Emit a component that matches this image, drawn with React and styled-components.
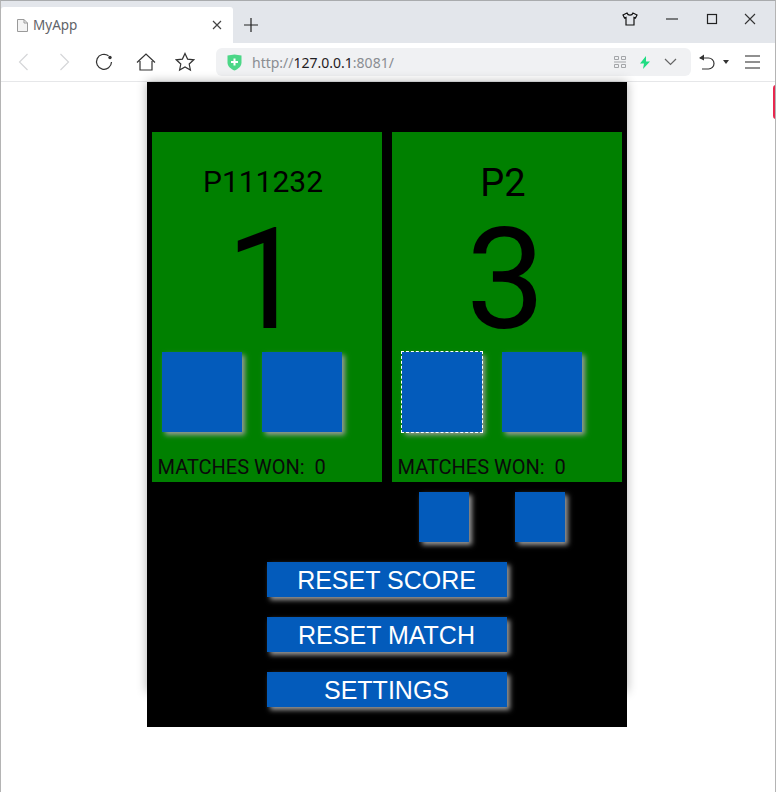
import React from "react";
import styled, { createGlobalStyle } from "styled-components";

const GlobalStyle = createGlobalStyle`
  html, body {
    margin: 0;
    padding: 0;
    background: #ffffff;
    overflow: hidden;
  }
  * {
    box-sizing: border-box;
  }
`;

const Window = styled.div`
  position: relative;
  width: 776px;
  height: 792px;
  display: flex;
  flex-direction: column;
  border-top: 1px solid #a9abad;
  border-left: 1px solid #b4b4b4;
  border-right: 1px solid #b4b4b4;
  overflow: hidden;
`;

const TabStrip = styled.div`
  height: 42px;
  background: #e3e6eb;
  display: flex;
  align-items: flex-end;
  flex-shrink: 0;
`;

const Tab = styled.div`
  width: 232px;
  height: 36px;
  background: #ffffff;
  border-radius: 3px 3px 0 0;
  display: flex;
  align-items: center;
  padding: 0 11px 0 15px;
  font-family: "Noto Sans", "Liberation Sans", sans-serif;
  font-size: 13.5px;
  color: #5f6368;
`;

const TabTitle = styled.span`
  margin-left: 4px;
  flex: 1;
`;

const NewTab = styled.div`
  width: 36px;
  height: 36px;
  display: flex;
  align-items: center;
  justify-content: center;
`;

const WindowControls = styled.div`
  margin-left: auto;
  height: 36px;
  display: flex;
  align-items: center;
  padding: 0 15px 12px 0;
`;

const ControlSlot = styled.div`
  width: 20px;
  height: 20px;
  display: flex;
  align-items: center;
  justify-content: center;
  margin-left: ${(props) => props.$gap}px;
`;

const Toolbar = styled.div`
  height: 39px;
  flex-shrink: 0;
  background: #ffffff;
  border-bottom: 1px solid #e6e7e9;
  display: flex;
  align-items: center;
  padding-left: 12px;
`;

const NavButton = styled.div`
  width: 20px;
  height: 20px;
  display: flex;
  align-items: center;
  justify-content: center;
  margin-right: ${(props) => props.$gap}px;
`;

const AddressBar = styled.div`
  width: 475px;
  height: 28px;
  background: #f0f1f3;
  border-radius: 6px;
  display: flex;
  align-items: center;
  padding: 0 14px 0 11px;
  margin-left: 21px;
  font-family: "Noto Sans", "Liberation Sans", sans-serif;
  font-size: 14px;
  color: #8a8d92;
`;

const Url = styled.span`
  margin-left: 10px;
  flex: 1;
`;

const UrlHost = styled.span`
  color: #1f2023;
`;

const AddressIcons = styled.div`
  display: flex;
  align-items: center;
  gap: 13px;
`;

const ToolbarRight = styled.div`
  display: flex;
  align-items: center;
  margin-left: 7px;
`;

const Page = styled.div`
  flex: 1;
  display: flex;
  justify-content: center;
  align-items: flex-start;
  padding-right: 3px;
`;

const RedSliver = styled.div`
  position: absolute;
  right: -1px;
  top: 84px;
  width: 3px;
  height: 34px;
  background: #e8274f;
  border-radius: 3px 0 0 3px;
`;

const ShadowFrame = styled.div`
  width: 480px;
  height: 610px;
  box-shadow: 0 0 10px rgba(0, 0, 0, 0.3);
`;

const Stage = styled.div`
  width: 480px;
  height: 645px;
  background: #000000;
  padding: 50px 5px 0;
  display: flex;
  flex-direction: column;
  font-family: Roboto, "Liberation Sans", sans-serif;
`;

const Panels = styled.div`
  display: flex;
  gap: 10px;
`;

const Panel = styled.div`
  width: 230px;
  height: 350px;
  background: #008000;
  display: flex;
  flex-direction: column;
  color: #000000;
`;

const PlayerName = styled.div`
  font-size: ${(props) => props.$size}px;
  line-height: 40px;
  height: 40px;
  margin-top: ${(props) => props.$top}px;
  margin-bottom: ${(props) => 31 - props.$top}px;
  text-align: center;
  padding-right: 7px;
`;

const Score = styled.div`
  font-size: 141px;
  line-height: 140px;
  height: 140px;
  margin-top: 7px;
  text-align: center;
  padding-right: 2px;
`;

const PointButtons = styled.div`
  display: flex;
  gap: 20px;
  padding-left: 10px;
  margin-top: 2px;
`;

const SquareButton = styled.button`
  width: ${(props) => props.$size}px;
  height: ${(props) => props.$size}px;
  padding: 0;
  border: none;
  background: #035bbb;
  box-shadow: 3px 3px 5px #9a9a9a;
  outline: ${(props) => (props.$focused ? "1px dashed #ffffff" : "none")};
  outline-offset: 0;
  flex-shrink: 0;
`;

const MatchesWon = styled.div`
  margin-top: 23px;
  padding-left: 6px;
  font-size: 20px;
  line-height: 24px;
  white-space: pre;
  color: #0a0a0a;
`;

const SmallButtons = styled.div`
  display: flex;
  gap: 46px;
  margin-top: 10px;
  padding-left: 267px;
`;

const ActionButtons = styled.div`
  display: flex;
  flex-direction: column;
  align-items: center;
  gap: 20px;
  margin-top: 20px;
`;

const ActionButton = styled.button`
  width: 240px;
  height: 35px;
  padding: 1px 0 0;
  border: none;
  background: #035bbb;
  color: #ffffff;
  font-family: "Liberation Sans", Arial, sans-serif;
  font-size: 25px;
  line-height: 33px;
  box-shadow: 3px 3px 5px #9a9a9a;
`;

const Stroke = ({ w = 20, h = 20, children, color = "#333333", sw = 1.3 }) => (
  <svg width={w} height={h} viewBox={`0 0 ${w} ${h}`} fill="none" stroke={color} strokeWidth={sw}>
    {children}
  </svg>
);

export default function App() {
  return (
    <>
      <GlobalStyle />
      <Window>
        <TabStrip>
          <Tab>
            <Stroke w={13} h={15} color="#9a9a9a" sw={1}>
              <path d="M1.5 1.5h6.5l3.5 3.5v8.5h-10z" fill="#f4f4f4" />
              <path d="M8 1.5v3.5h3.5" />
            </Stroke>
            <TabTitle>MyApp</TabTitle>
            <Stroke w={10} h={10} color="#444444" sw={1.2}>
              <path d="M1 1l8 8M9 1l-8 8" />
            </Stroke>
          </Tab>
          <NewTab>
            <Stroke w={14} h={14} color="#222222" sw={1.2}>
              <path d="M7 0v14M0 7h14" />
            </Stroke>
          </NewTab>
          <WindowControls>
            <ControlSlot $gap={0}>
              <Stroke w={16} h={14} color="#111111" sw={1.2}>
                <path d="M5 1l-4 2 1.5 3 1.500-.6v7.600h8V5.400l1.500.6 1.500-3-4-2c-.5 1.600-1 2.200-3 2.200S5.500 2.600 5 1z" />
              </Stroke>
            </ControlSlot>
            <ControlSlot $gap={22}>
              <Stroke w={14} h={14} color="#222222" sw={1.1}>
                <path d="M1 7h12" />
              </Stroke>
            </ControlSlot>
            <ControlSlot $gap={20}>
              <Stroke w={12} h={12} color="#222222" sw={1.2}>
                <rect x="1.500" y="1.500" width="9" height="9" />
              </Stroke>
            </ControlSlot>
            <ControlSlot $gap={18}>
              <Stroke w={12} h={12} color="#333333" sw={1.1}>
                <path d="M1 1l10 10M11 1l-10 10" />
              </Stroke>
            </ControlSlot>
          </WindowControls>
        </TabStrip>
        <Toolbar>
          <NavButton $gap={21}>
            <Stroke w={11} h={18} color="#d5d6d8" sw={1.2}>
              <path d="M9.500 1L1.500 9l8 8" />
            </Stroke>
          </NavButton>
          <NavButton $gap={20}>
            <Stroke w={11} h={18} color="#d5d6d8" sw={1.2}>
              <path d="M1.500 1l8 8-8 8" />
            </Stroke>
          </NavButton>
          <NavButton $gap={22}>
            <Stroke w={18} h={18} color="#333333" sw={1.2}>
              <path d="M13.500 2.800A7.500 7.500 0 1 0 16.500 9" />
              <circle cx="15" cy="4.500" r="1.700" fill="#333333" stroke="none" />
            </Stroke>
          </NavButton>
          <NavButton $gap={19}>
            <Stroke w={20} h={18} color="#333333" sw={1.2}>
              <path d="M1 9.500L10 1l9 8.500M4 8v9h12V8" />
            </Stroke>
          </NavButton>
          <NavButton $gap={0}>
            <Stroke w={20} h={20} color="#333333" sw={1.2}>
              <path d="M10 1.500l2.600 5.600 6.100.7-4.500 4.200 1.200 6-5.400-3-5.400 3 1.200-6-4.500-4.200 6.100-.7z" />
            </Stroke>
          </NavButton>
          <AddressBar>
            <svg width="15" height="17" viewBox="0 0 15 17">
              <path d="M0.500 1.500L7.500 0.500l7 1v7c0 4-3.500 6.500-7 8-3.500-1.500-7-4-7-8z" fill="#4cd787" />
              <path d="M7.500 4.500v7M4 8h7" stroke="#ffffff" strokeWidth="2" />
            </svg>
            <Url>
              http://<UrlHost>127.0.0.1</UrlHost>:8081/
            </Url>
            <AddressIcons>
              <Stroke w={12} h={12} color="#a3a5a8" sw={1}>
                <path d="M.5.500h4v3h-4zM7.500.500h4v3h-4zM.5 8.500h4v3h-4zM7.500 8.500h4v3h-4zM0 6h12" />
              </Stroke>
              <svg width="12" height="13" viewBox="0 0 12 13">
                <path d="M7 0L1 7.500h4L4 13l7-7.500H7z" fill="#1fdc82" />
              </svg>
              <Stroke w={13} h={8} color="#666666" sw={1.2}>
                <path d="M1 1l5.500 5.500L12 1" />
              </Stroke>
            </AddressIcons>
          </AddressBar>
          <ToolbarRight>
            <Stroke w={18} h={18} color="#333333" sw={1.2}>
              <path d="M2 5h8.500a5.500 5.500 0 0 1 0 11H4" />
              <path d="M6 1.500L1 5l5 2.500z" fill="#333333" stroke="none" />
            </Stroke>
            <NavButton $gap={9}>
              <svg width="6" height="4" viewBox="0 0 6 4">
                <path d="M0 0h6L3 4z" fill="#333333" />
              </svg>
            </NavButton>
            <Stroke w={15} h={14} color="#222222" sw={1.1}>
              <path d="M0 1h15M0 7h15M0 13h15" />
            </Stroke>
          </ToolbarRight>
        </Toolbar>
        <Page>
          <ShadowFrame>
            <Stage>
              <Panels>
                <Panel>
                  <PlayerName $size={30} $top={30}>P111232</PlayerName>
                  <Score>1</Score>
                  <PointButtons>
                    <SquareButton $size={80} />
                    <SquareButton $size={80} />
                  </PointButtons>
                  <MatchesWon>MATCHES WON:  0</MatchesWon>
                </Panel>
                <Panel>
                  <PlayerName $size={38} $top={31}>P2</PlayerName>
                  <Score>3</Score>
                  <PointButtons>
                    <SquareButton $size={80} $focused />
                    <SquareButton $size={80} />
                  </PointButtons>
                  <MatchesWon>MATCHES WON:  0</MatchesWon>
                </Panel>
              </Panels>
              <SmallButtons>
                <SquareButton $size={50} />
                <SquareButton $size={50} />
              </SmallButtons>
              <ActionButtons>
                <ActionButton>RESET SCORE</ActionButton>
                <ActionButton>RESET MATCH</ActionButton>
                <ActionButton>SETTINGS</ActionButton>
              </ActionButtons>
            </Stage>
          </ShadowFrame>
        </Page>
        <RedSliver />
      </Window>
    </>
  );
}
